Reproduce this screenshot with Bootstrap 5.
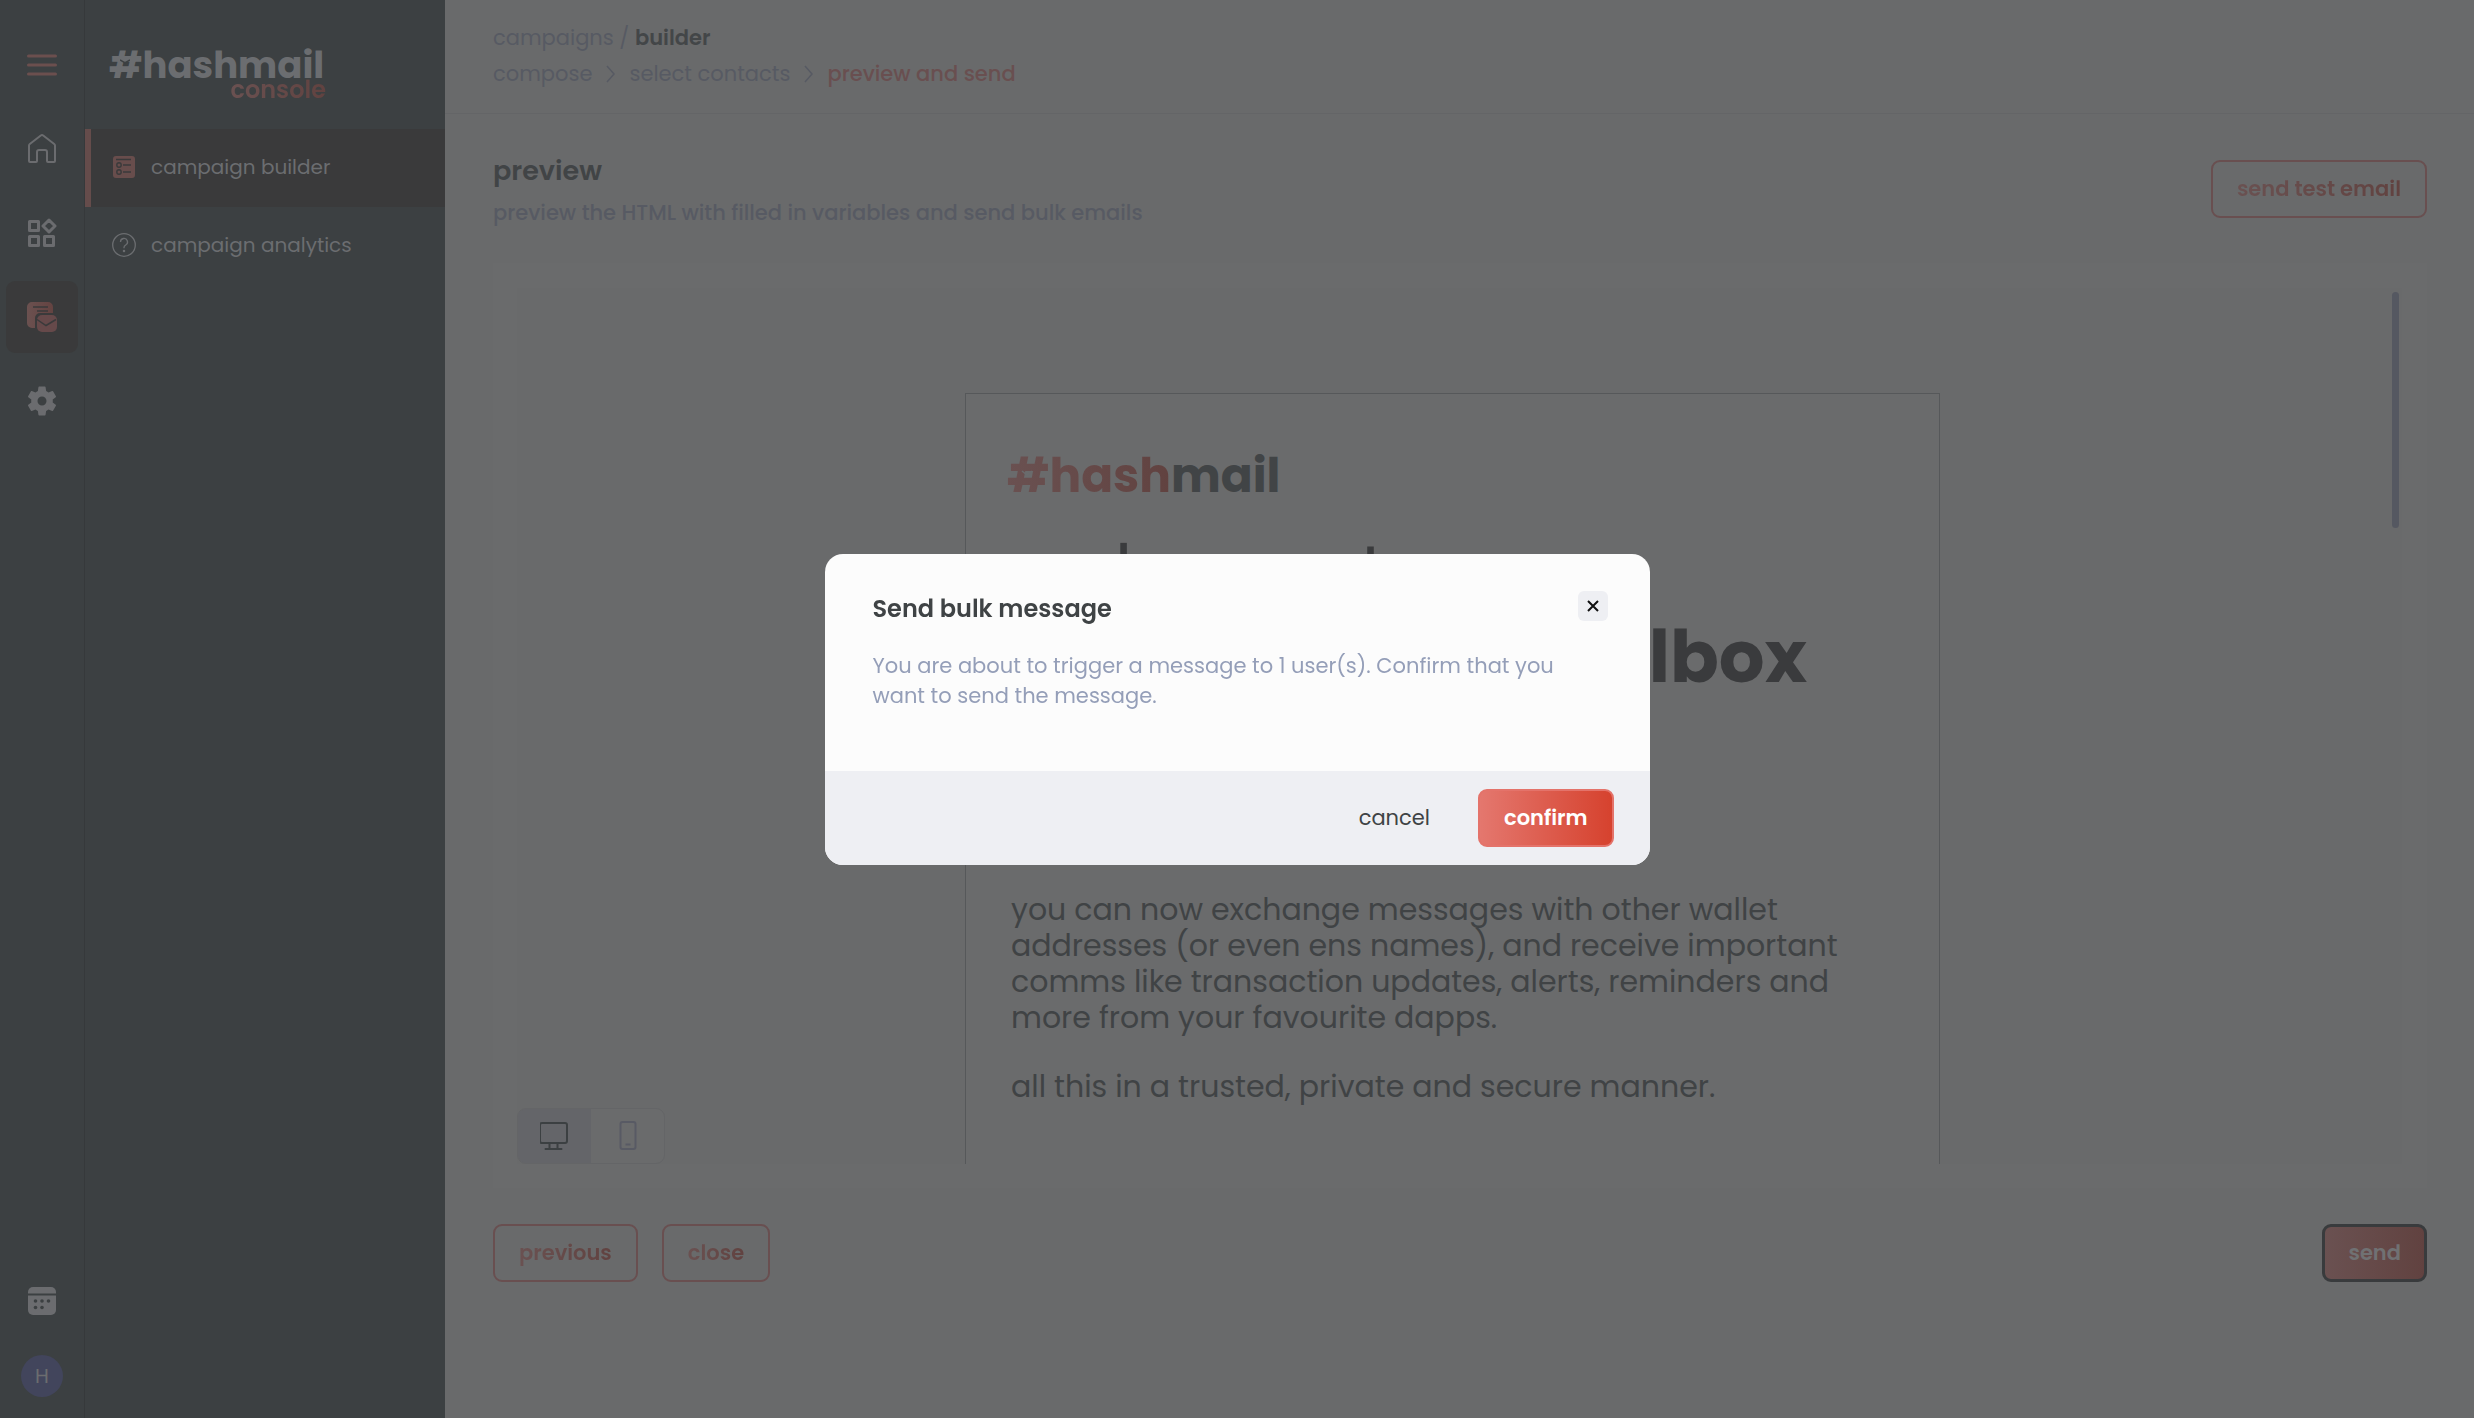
<!DOCTYPE html>
<html lang="en">
<head>
<meta charset="utf-8">
<meta name="viewport" content="width=device-width, initial-scale=1">
<title>#hashmail console</title>
<link href="https://cdn.jsdelivr.net/npm/bootstrap@5.3.0/dist/css/bootstrap.min.css" rel="stylesheet">
<style>
  :root {
    --dark: #3c4042; --ink: #414446; --surface: #696a6b; --paper: #6a6b6c;
    --muted: #575a63; --red: #694f50; --fade: linear-gradient(90deg, #6a5151, #614240);
  }
  body { font-family: Poppins, Inter, "Open Sans", sans-serif; font-size: 21px; background: var(--surface); color: var(--ink); }
  a { color: inherit; text-decoration: none; }
  svg { display: block; }
  .rail { width: 85px; background: var(--dark); border-right: 1px solid #36393b; color: #6b6c6f; padding: 29px 0 21px; }
  .rail-top { gap: 12px; }
  .rail-end { gap: 18px; }
  .rail-item { width: 72px; height: 72px; border: 0; padding: 0; background: none; color: inherit; border-radius: 9px; }
  .rail-item.current { background: #3a3a3b; }
  .avatar { width: 42px; height: 42px; background: #42455c; color: #6b6c6f; font-size: 20px; }
  .side { width: 360px; background: var(--dark); color: #6b6d70; font-size: 20px; }
  .brand { height: 129px; padding: 45px 0 0 24px; }
  .brand-box { width: 217px; }
  .logo { font-weight: 700; font-size: 37px; line-height: 40px; }
  .logo-tag { font-size: 24px; line-height: 18px; font-weight: 600; margin-top: -4px; }
  .fade-text { background: var(--fade); -webkit-background-clip: text; background-clip: text; color: transparent; }
  .side-link { height: 78px; padding: 0 0 2px 21px; gap: 15px; border-left: 6px solid transparent; }
  .side-link.current { background: #3a3a3b; border-color: #654c4b; }
  .topbar { height: 114px; padding: 20px 48px 0; border-bottom: 1px solid #646567; line-height: 36px; color: var(--muted); }
  .topbar .here { font-weight: 600; color: #434648; }
  .topbar .step { font-weight: 500; color: var(--red); }
  .topbar svg { margin: 0 14px; }
  .content { padding: 39px 47px 136px 48px; }
  h1 { font-size: 27px; line-height: 36px; font-weight: 600; margin-bottom: 6px; }
  .sub { line-height: 36px; font-weight: 500; color: var(--muted); margin-bottom: 32px; }
  .act { height: 58px; padding: 0 24px; font-size: 21px; font-weight: 600; border: 2px solid var(--red); border-radius: 9px; background: none; }
  .act-test { margin-top: 7px; }
  .act-send { background: var(--fade); border: 3px solid #393b3d; color: #707173; padding: 0 23px; }
  .preview-card { background: var(--paper); padding: 25px 25px 24px 24px; margin-bottom: 36px; }
  .stage { background: #696a6b; }
  .gutter { width: 14px; padding: 4px 3px 0 4px; }
  .thumb { height: 236px; width: 7px; border-radius: 4px; background: #555861; }
  .mail { width: 975px; margin: 105px auto 0; padding: 52px 44px 0 45px; border: 1px solid #56585a; border-bottom: 0; background: var(--paper); }
  .mail .logo { font-size: 47px; line-height: 60px; margin-left: -4px; }
  .mail h2 { font-size: 72px; line-height: 86px; font-weight: 400; color: #3a3b3d; margin: 22px 0 192px; }
  .mail h2 strong { font-weight: 700; }
  .mail p { font-size: 30px; line-height: 36px; margin-bottom: 33px; color: #404345; }
  .notch { left: 11px; top: 14px; }
  .mail .notch { left: 14px; top: 24px; }
  .device { left: 0; bottom: 0; width: 148px; height: 56px; border: 1px solid #646567; border-radius: 9px; overflow: hidden; background: var(--paper); }
  .device button { border: 0; background: none; padding: 0; color: #585a64; }
  .device button.on { background: #646569; color: #3c4042; }
  .modal-dialog { max-width: 825px; }
  .modal-content { border: 0; border-radius: 18px; overflow: hidden; background: #fcfcfc; color: #3f4345; }
  .modal-header { border: 0; padding: 37px 42px 0 48px; }
  .modal-title { font-size: 24px; line-height: 36px; font-weight: 600; }
  .modal-body { padding: 24px 48px 60px; line-height: 30px; color: #949eb8; }
  .shut { width: 30px; height: 30px; border: 0; padding: 0; border-radius: 6px; background: #eeeff3; color: #111; }
  .modal-footer { border: 0; border-radius: 0; background: #eeeff3; padding: 18px 36px; gap: 22px; }
  .modal-footer > * { margin: 0; }
  .act-plain { border-color: transparent; font-weight: 400; color: #3f4345; }
  .act-confirm { border-color: #e4736a; background: linear-gradient(90deg, #e4776e, #d6422e); color: #fff; }
</style>
</head>
<body>
<div class="d-flex vh-100">
  <nav class="rail d-flex flex-column align-items-center flex-shrink-0" aria-label="Primary">
    <div class="rail-top d-flex flex-column">
      <button class="rail-item d-grid" aria-label="Menu"><svg class="m-auto" width="30" height="24" viewBox="0 0 30 24" stroke="#6b4f4e" stroke-width="3" stroke-linecap="round"><path d="M1.5 3h27M1.5 12h27M1.5 21h27"/></svg></button>
      <a class="rail-item d-grid" href="#" aria-label="Home"><svg class="m-auto" width="30" height="30" viewBox="0 0 30 30" fill="none" stroke="currentColor" stroke-width="2" stroke-linejoin="round"><path d="M3 28a1 1 0 0 1-1-1V11.500a2 2 0 0 1 .8-1.500L13.800 1.500a2 2 0 0 1 2.400 0L27.200 10a2 2 0 0 1 .8 1.500V27a1 1 0 0 1-1 1h-6a1 1 0 0 1-1-1v-9a2 2 0 0 0-2-2h-6a2 2 0 0 0-2 2v9a1 1 0 0 1-1 1z"/></svg></a>
      <a class="rail-item d-grid" href="#" aria-label="Apps"><svg class="m-auto" width="30" height="30" viewBox="0 0 30 30" fill="none" stroke="currentColor" stroke-width="3" stroke-linejoin="round"><path d="M2.500 3.500h9v9h-9zM2.500 18.500h9v9h-9zM17.500 18.500h9v9h-9zM22 2l6 6-6 6-6-6z"/></svg></a>
      <a class="rail-item current d-grid" href="#" aria-label="Campaigns"><svg class="m-auto" width="30" height="30" viewBox="0 0 30 30"><defs><linearGradient id="warm"><stop stop-color="#6b5150"/><stop offset="1" stop-color="#644341"/></linearGradient></defs><path fill="url(#warm)" d="M5 0h16a5 5 0 0 1 5 5v6H13a5 5 0 0 0-5 5v10H5a5 5 0 0 1-5-5V5a5 5 0 0 1 5-5z"/><rect x="10" y="13" width="20" height="17" rx="5" fill="#66494a"/><path d="M6 5h15M10 9h11M10 17.500l9 6 10-6" fill="none" stroke="#3a3a3b" stroke-width="1.500"/></svg></a>
      <a class="rail-item d-grid" href="#" aria-label="Settings"><svg class="m-auto" width="36" height="36" viewBox="0 0 24 24" fill="currentColor"><path d="M19.140 12.940c.04-.3.06-.61.06-.94 0-.32-.02-.64-.07-.94l2.030-1.580a.49.49 0 0 0 .12-.61l-1.920-3.320a.488.488 0 0 0-.59-.22l-2.390.96c-.5-.38-1.030-.7-1.620-.94l-.36-2.540a.484.484 0 0 0-.48-.41h-3.840c-.24 0-.43.17-.47.41l-.36 2.540c-.59.24-1.130.57-1.620.94l-2.390-.96c-.22-.08-.47 0-.59.22L2.740 8.870c-.12.21-.08.47.12.61l2.030 1.580c-.05.3-.09.63-.09.94s.02.64.07.94l-2.030 1.580a.49.49 0 0 0-.12.61l1.920 3.320c.12.22.37.29.59.22l2.390-.96c.5.38 1.030.7 1.620.94l.36 2.540c.05.24.24.41.48.41h3.840c.24 0 .44-.17.47-.41l.36-2.540c.59-.24 1.130-.56 1.620-.94l2.390.96c.22.08.47 0 .59-.22l1.920-3.320c.12-.22.07-.47-.12-.61l-2.010-1.580zM12 15a3 3 0 1 1 0-6 3 3 0 0 1 0 6z"/></svg></a>
    </div>
    <div class="rail-end mt-auto d-flex flex-column align-items-center">
      <a class="rail-item d-grid" href="#" aria-label="Calendar"><svg class="m-auto" width="28" height="28" viewBox="0 0 28 28"><rect width="28" height="28" rx="5" fill="currentColor"/><path d="M0 7.500h28" stroke="#3c4042" stroke-width="2"/><g fill="#3c4042"><circle cx="7.500" cy="14" r="1.800"/><circle cx="14" cy="14" r="1.800"/><circle cx="20.500" cy="14" r="1.800"/><circle cx="7.500" cy="20.500" r="1.800"/><circle cx="14" cy="20.500" r="1.800"/></g></svg></a>
      <a class="avatar rounded-circle d-flex align-items-center justify-content-center" href="#">H</a>
    </div>
  </nav>

  <aside class="side flex-shrink-0">
    <div class="brand">
      <div class="brand-box position-relative">
        <div class="logo">#hashmail</div>
        <div class="logo-tag text-end"><span class="fade-text">console</span></div>
        <svg class="notch position-absolute" width="10" height="6" viewBox="0 0 10 6" fill="none" stroke="#3c4042" stroke-width="1.500"><path d="M0 1l5 3 5-3"/></svg>
      </div>
    </div>
    <a class="side-link current d-flex align-items-center" href="#"><svg width="24" height="24" viewBox="0 0 24 24"><rect x="1" y="1" width="22" height="22" rx="3" fill="#684d4c"/><g fill="none" stroke="#3a3a3b" stroke-width="1.400"><path d="M4 4.500h15M11 10h8M11 17h8"/><circle cx="7" cy="10" r="2.200"/><circle cx="7" cy="17" r="2.200"/></g></svg>campaign builder</a>
    <a class="side-link d-flex align-items-center" href="#"><svg width="24" height="24" viewBox="0 0 24 24" fill="none" stroke="currentColor" stroke-width="1.300"><circle cx="12" cy="12" r="11.300"/><path d="M8.500 9a3.500 3.500 0 1 1 5.200 3c-1.200.7-1.700 1.300-1.700 2.500v.8"/><circle cx="12" cy="18" r=".6" fill="currentColor"/></svg>campaign analytics</a>
  </aside>

  <main class="flex-grow-1 d-flex flex-column overflow-hidden">
    <header class="topbar flex-shrink-0">
      <div><a href="#">campaigns</a> / <span class="here">builder</span></div>
      <div class="d-flex align-items-center">
        <a href="#">compose</a>
        <svg width="9" height="18" viewBox="0 0 9 18" fill="none" stroke="currentColor" stroke-width="1.500"><path d="M1 1l7 8-7 8"/></svg>
        <a href="#">select contacts</a>
        <svg width="9" height="18" viewBox="0 0 9 18" fill="none" stroke="currentColor" stroke-width="1.500"><path d="M1 1l7 8-7 8"/></svg>
        <span class="step">preview and send</span>
      </div>
    </header>

    <section class="content flex-grow-1 d-flex flex-column">
      <div class="d-flex justify-content-between align-items-start">
        <div>
          <h1>preview</h1>
          <p class="sub">preview the HTML with filled in variables and send bulk emails</p>
        </div>
        <button class="act act-test"><span class="fade-text">send test email</span></button>
      </div>

      <div class="preview-card flex-grow-1 d-flex">
        <div class="stage position-relative flex-grow-1 d-flex overflow-hidden">
          <div class="flex-grow-1">
            <article class="mail h-100">
              <div class="logo position-relative"><span class="fade-text">#hash</span><span>mail</span>
                <svg class="notch position-absolute" width="12" height="8" viewBox="0 0 12 8" fill="none" stroke="#6a6b6d" stroke-width="1.500"><path d="M1 1l5 4 5-4"/></svg>
              </div>
              <h2>welcome to<br><strong>your wallet’s mailbox</strong></h2>
              <p>you can now exchange messages with other wallet addresses (or even ens names), and receive important comms like transaction updates, alerts, reminders and more from your favourite dapps.</p>
              <p>all this in a trusted, private and secure manner.</p>
            </article>
          </div>
          <div class="gutter"><div class="thumb"></div></div>
          <div class="device position-absolute d-flex">
            <button class="on d-flex w-50 align-items-center justify-content-center" aria-label="Desktop preview"><svg width="30" height="30" viewBox="0 0 30 30" fill="none" stroke="currentColor" stroke-width="2" stroke-linecap="round"><rect x="0" y="2" width="27" height="20" rx="2"/><path d="M9.500 22v5M17.500 22v5M5.500 28h16"/></svg></button>
            <button class="d-flex w-50 align-items-center justify-content-center" aria-label="Mobile preview"><svg width="18" height="30" viewBox="0 0 18 30" fill="none" stroke="currentColor" stroke-width="2"><rect x="1.500" y="1" width="15" height="27" rx="2"/><path d="M6.500 23.500h5"/></svg></button>
          </div>
        </div>
      </div>

      <div class="d-flex justify-content-between">
        <div class="d-flex gap-4">
          <button class="act"><span class="fade-text">previous</span></button>
          <button class="act"><span class="fade-text">close</span></button>
        </div>
        <button class="act act-send">send</button>
      </div>
    </section>
  </main>
</div>

<div class="modal show d-block" tabindex="-1" role="dialog" aria-modal="true" aria-labelledby="bulkTitle">
  <div class="modal-dialog modal-dialog-centered">
    <div class="modal-content">
      <div class="modal-header align-items-start">
        <h2 class="modal-title" id="bulkTitle">Send bulk message</h2>
        <button class="shut" aria-label="Close"><svg class="m-auto" width="12" height="12" viewBox="0 0 12 12" stroke="currentColor" stroke-width="2"><path d="M1 1l10 10M11 1L1 11"/></svg></button>
      </div>
      <div class="modal-body">You are about to trigger a message to 1 user(s). Confirm that you want to send the message.</div>
      <div class="modal-footer">
        <button class="act act-plain">cancel</button>
        <button class="act act-confirm">confirm</button>
      </div>
    </div>
  </div>
</div>
<script src="https://cdn.jsdelivr.net/npm/bootstrap@5.3.0/dist/js/bootstrap.bundle.min.js"></script>
</body>
</html>
